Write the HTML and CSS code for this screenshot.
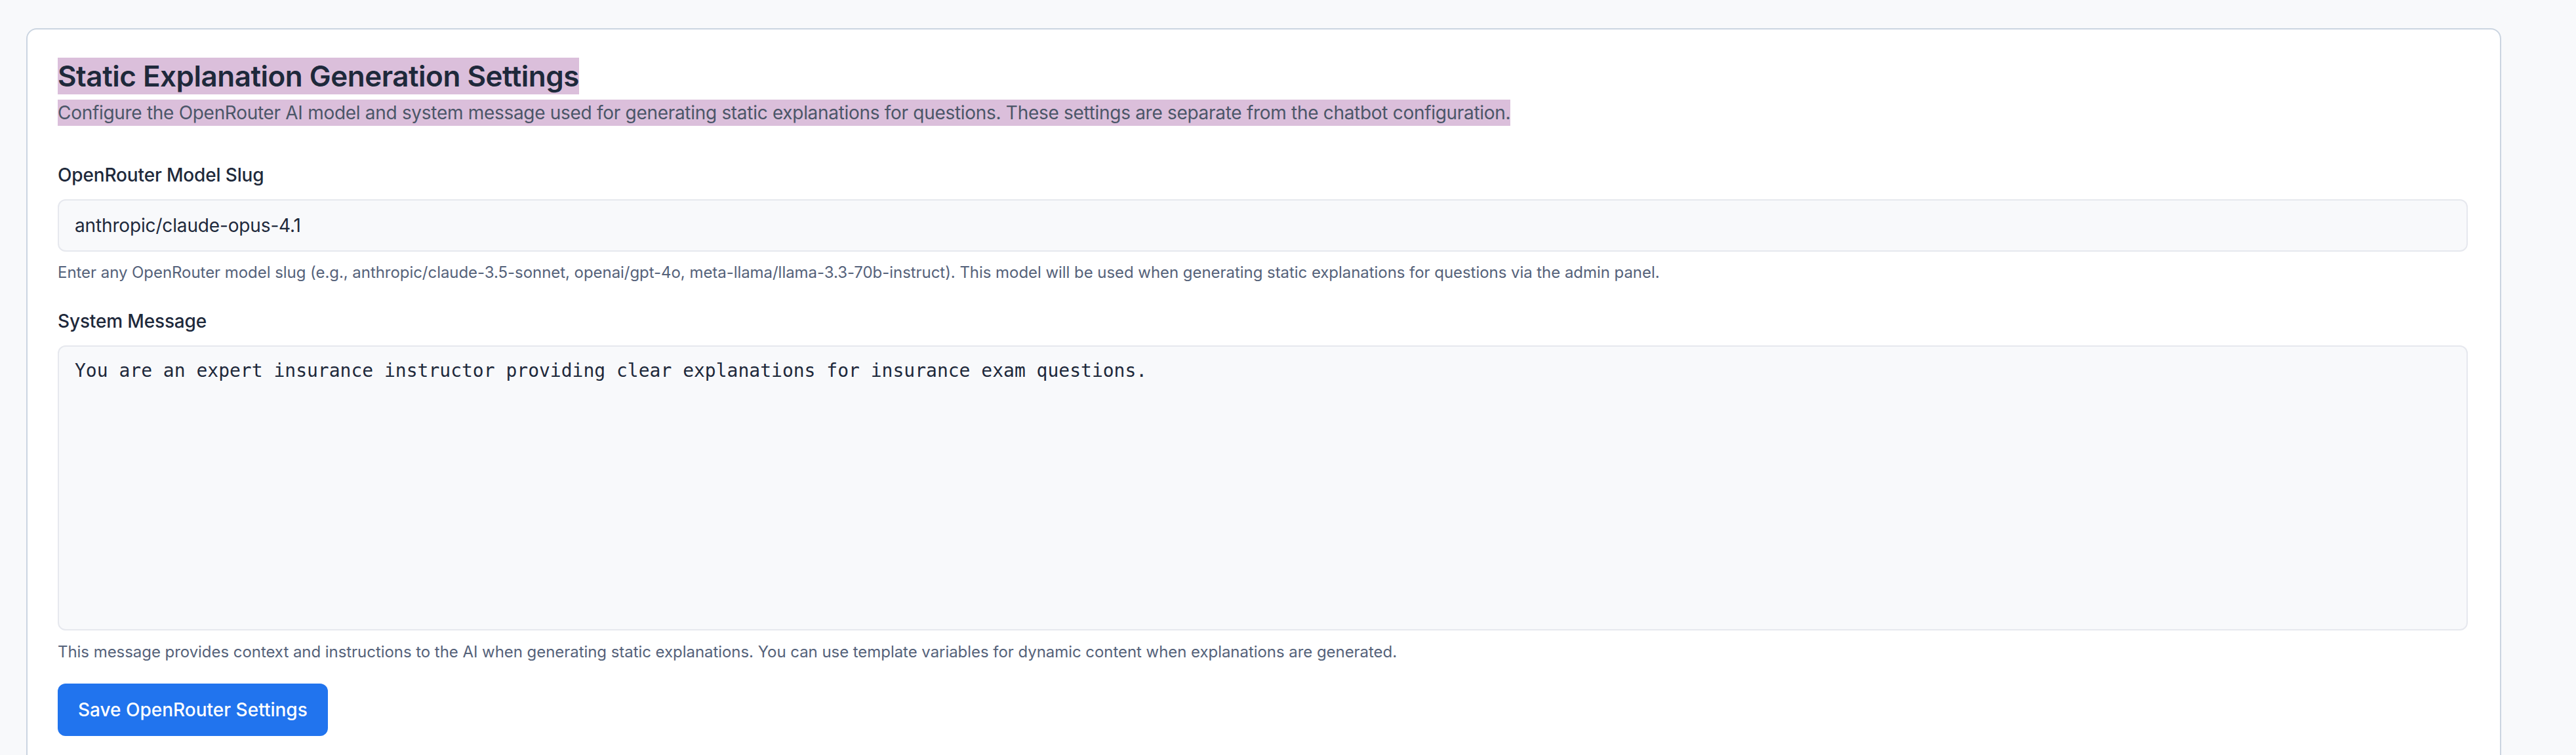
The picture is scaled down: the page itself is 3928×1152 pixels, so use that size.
FILE: index.html
```html
<!DOCTYPE html>
<html lang="en">
<head>
<meta charset="utf-8">
<title>Static Explanation Generation Settings</title>
<link rel="stylesheet" href="styles.css">
</head>
<body>
<main class="page">
  <section class="card">
    <header class="card-header">
      <h2 class="title"><span class="sel">Static Explanation Generation Settings</span></h2>
      <p class="subtitle"><span class="sel">Configure the OpenRouter AI model and system message used for generating static explanations for questions. These settings are separate from the chatbot configuration.</span></p>
    </header>
    <div class="field field-model">
      <label class="label" for="slug">OpenRouter Model Slug</label>
      <input class="input" id="slug" type="text" value="anthropic/claude-opus-4.1">
      <p class="help">Enter any OpenRouter model slug (e.g., anthropic/claude-3.5-sonnet, openai/gpt-4o, meta-llama/llama-3.3-70b-instruct). This model will be used when generating static explanations for questions via the admin panel.</p>
    </div>
    <div class="field field-system">
      <label class="label" for="sys">System Message</label>
      <textarea class="textarea" id="sys">You are an expert insurance instructor providing clear explanations for insurance exam questions.</textarea>
      <p class="help">This message provides context and instructions to the AI when generating static explanations. You can use template variables for dynamic content when explanations are generated.</p>
    </div>
    <button class="btn" type="button">Save OpenRouter Settings</button>
  </section>
</main>
</body>
</html>
```

FILE: styles.css
```css
* { box-sizing: border-box; }

html, body {
  margin: 0;
  padding: 0;
  background: #f8f9fb;
  font-family: Inter, "Noto Sans", "Liberation Sans", sans-serif;
  color: #1e293b;
}

.page {
  padding: 43px 0 0 40px;
}

.card {
  width: 3774px;
  background: #ffffff;
  border: 2px solid #cbd5e1;
  border-radius: 16px;
  padding: 43px 49px 48px 46px;
}

.card-header {
  display: flex;
  flex-direction: column;
  align-items: flex-start;
  gap: 8px;
}

.title {
  margin: 0;
  font-size: 44px;
  line-height: 56px;
  font-weight: 600;
  color: #1e293b;
  letter-spacing: -0.5px;
}

.subtitle {
  margin: 0;
  font-size: 28px;
  line-height: 40px;
  color: #4b5668;
  letter-spacing: -0.3px;
}

.sel {
  display: inline-block;
  background: #dbbfdb;
}

.field {
  display: flex;
  flex-direction: column;
}

.field-model { margin-top: 55px; }
.field-system { margin-top: 38px; }

.label {
  font-size: 28px;
  line-height: 40px;
  font-weight: 500;
  color: #1e293b;
  margin-bottom: 17px;
  letter-spacing: -0.15px;
}

.input,
.textarea {
  width: 100%;
  background: #f8f9fb;
  border: 2px solid #e6e8ee;
  border-radius: 12px;
  color: #1e293b;
  outline: none;
  margin: 0;
}

.input {
  height: 80px;
  padding: 0 24px;
  font-family: Inter, "Noto Sans", "Liberation Sans", sans-serif;
  font-size: 28px;
  line-height: 48px;
  letter-spacing: -0.15px;
}

.textarea {
  height: 435px;
  padding: 17px 24px;
  font-family: "DejaVu Sans Mono", "Liberation Mono", monospace;
  font-size: 28px;
  line-height: 40px;
  resize: none;
  overflow: hidden;
}

.help {
  margin: 16px 0 0;
  font-size: 24px;
  line-height: 32px;
  color: #55627a;
  letter-spacing: -0.05px;
}

.field-system .help { margin-top: 17px; }

.btn {
  display: block;
  margin-top: 32px;
  height: 80px;
  padding: 0 31px;
  background: #2174ee;
  color: #ffffff;
  border: none;
  border-radius: 12px;
  font-family: Inter, "Noto Sans", "Liberation Sans", sans-serif;
  font-size: 28px;
  line-height: 40px;
  font-weight: 500;
  cursor: pointer;
}
```
